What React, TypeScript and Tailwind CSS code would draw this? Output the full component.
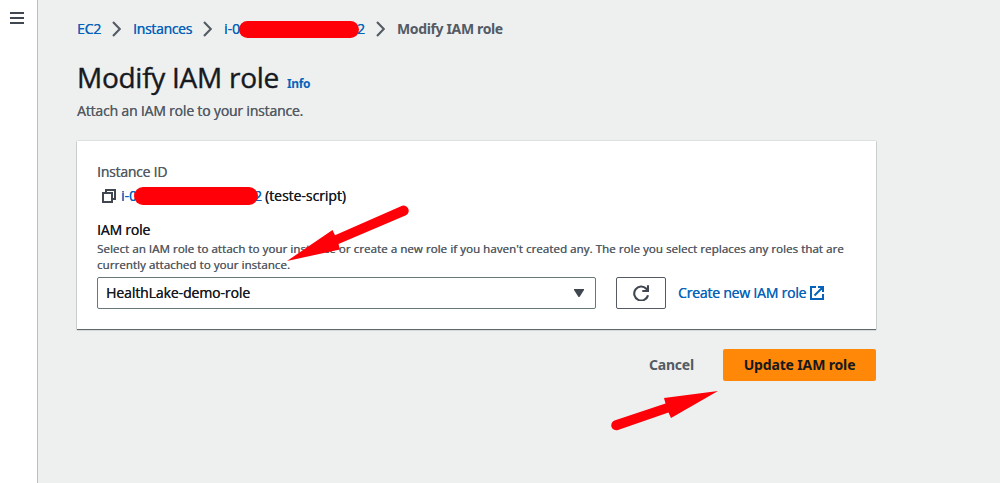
import type { ReactNode } from "react";

const medium = "[text-shadow:0.3px_0_0_currentColor]";

function Chevron() {
  return (
    <svg className="-ml-px mr-px h-4 w-[9px] shrink-0" viewBox="0 0 9 16" fill="none" stroke="#545b64" strokeWidth="2.1">
      <path d="M1 1 7.8 8 1 15" />
    </svg>
  );
}

function Redaction({ className }: { className: string }) {
  return <span className={`absolute rounded-full bg-[#ff0008] ${className}`} />;
}

function Label({ children, className }: { children: ReactNode; className: string }) {
  return <p className={`h-[22px] leading-[22px] ${medium} ${className}`}>{children}</p>;
}

export default function App() {
  return (
    <div className="relative flex h-[483px] w-[1000px] overflow-hidden bg-[#eef0f0] font-['Open_Sans','Noto_Sans',sans-serif] text-sm text-[#16191f]">
      <aside className="w-[38px] shrink-0 border-r border-[#b8bec2] bg-white pt-3 pl-[10px]">
        <svg className="block h-3 w-[14px]" viewBox="0 0 14 12" fill="#414750">
          <path d="M0 0h14v2H0zM0 5h14v2H0zM0 10h14v2H0z" />
        </svg>
      </aside>

      <main className="ml-[39px] w-[799px] pt-[18px]">
        <nav className="flex h-[22px] items-center whitespace-nowrap leading-[22px] text-[#0763b9]">
          <a className={`w-9 tracking-[-0.2px] ${medium}`}>EC2</a>
          <Chevron />
          <a className={`ml-[11px] w-[71px] tracking-[-0.31px] ${medium}`}>Instances</a>
          <Chevron />
          <a className={`relative ml-[11px] flex w-[153px] ${medium}`}>
            <span className="w-[133px]">i-0</span>
            <span>2</span>
            <Redaction className="top-[3px] left-[15px] h-[17px] w-[120px]" />
          </a>
          <Chevron />
          <span className="ml-[11px] font-['Noto_Sans',sans-serif] font-bold tracking-[-0.36px] text-[#545b64]">
            Modify IAM role
          </span>
        </nav>

        <header className="mt-[19px] flex h-9 items-baseline whitespace-nowrap">
          <h1 className="w-[210px] text-[28px] leading-9 tracking-[-0.27px] [-webkit-text-stroke:0.4px_currentColor]">
            Modify IAM role
          </h1>
          <a className="font-['Noto_Sans',sans-serif] text-xs font-bold tracking-[-0.4px] text-[#0763b9]">Info</a>
        </header>
        <p className={`mt-[5px] h-[22px] leading-[22px] tracking-[-0.18px] text-[#545b64] ${medium}`}>
          Attach an IAM role to your instance.
        </p>

        <section className="mt-[19px] h-[188px] bg-white px-5 pt-5 shadow-[0_1px_1px_0_#5f6b6b,0_0_1px_0_#8d9999]">
          <Label className="tracking-[-0.25px] text-[#545b64]">Instance ID</Label>
          <div className="mt-[2px] flex h-[22px] items-center whitespace-nowrap pl-[5px] leading-[22px]">
            <svg className="h-[14px] w-[14px] shrink-0" viewBox="0 0 14 14" fill="none" stroke="#414750" strokeWidth="2">
              <path d="M1 4h9v9H1zM4 4V1h9v9h-3" />
            </svg>
            <span className={`relative ml-[5px] flex w-36 text-[#0763b9] ${medium}`}>
              <span className="w-[133px]">i-0</span>
              <span>2</span>
              <Redaction className="top-[2px] left-[13px] h-[18px] w-[124px]" />
            </span>
            <span className={`tracking-[-0.03px] ${medium}`}>(teste-script)</span>
          </div>
          <Label className="mt-3 tracking-[-0.19px]">IAM role</Label>
          <p className={`whitespace-nowrap text-[11.5px] leading-4 tracking-[0.065px] text-[#545b64] ${medium}`}>
            Select an IAM role to attach to your instance or create a new role if you haven't created any. The role you
            select replaces any roles that are
            <br />
            currently attached to your instance.
          </p>
          <div className="mt-1 flex items-center">
            <button className={`flex h-8 w-[499px] items-center justify-between rounded-[2px] border border-[#687878] bg-white pr-[11px] pl-2 tracking-[-0.09px] ${medium}`}>
              HealthLake-demo-role
              <svg className="h-2 w-[10px]" viewBox="0 0 10 8" fill="#414750">
                <path d="M0 0h10v1L5.5 8h-1L0 1z" />
              </svg>
            </button>
            <button className="ml-5 flex h-8 w-[50px] items-center justify-center rounded-[2px] border border-[#545b64]">
              <svg className="h-4 w-4" viewBox="0 0 16 16" fill="none" stroke="#414750" strokeWidth="2.1">
                <path d="M15 10.3A7 7 0 1 1 13.300 3.700L15 5.500M15 0.200V6H9.300" />
              </svg>
            </button>
            <a className={`ml-3 flex items-center whitespace-nowrap tracking-[-0.21px] text-[#0763b9] ${medium}`}>
              <span className="w-[132px]">Create new IAM role</span>
              <svg className="h-[14px] w-[14px]" viewBox="0 0 14 14" fill="none" stroke="currentColor" strokeWidth="2">
                <path d="M6 1H1v12h12V8M8 1h5v5M13 1 4.5 9.5" />
              </svg>
            </a>
          </div>
        </section>

        <div className="mt-5 flex items-center justify-end font-['Noto_Sans',sans-serif] font-bold">
          <button className="mr-[29px] tracking-[-0.2px] text-[#545b64]">Cancel</button>
          <button className="h-8 w-[153px] rounded-[2px] bg-[#ff8809] tracking-[-0.15px]">Update IAM role</button>
        </div>
      </main>

      <svg className="absolute inset-0 h-[483px] w-[1000px]" viewBox="0 0 1000 483" fill="#ff0008">
        <path d="M287 261 332.5 230 335 235.3 401 206.2A5 5 0 0 1 406 215.3L338.500 244 340 249.500Z" />
        <path d="M718 391 664 398 665.500 403.500 614.500 420.500A5 5 0 0 0 618 430L668.500 412.500 671 418Z" />
      </svg>
    </div>
  );
}
